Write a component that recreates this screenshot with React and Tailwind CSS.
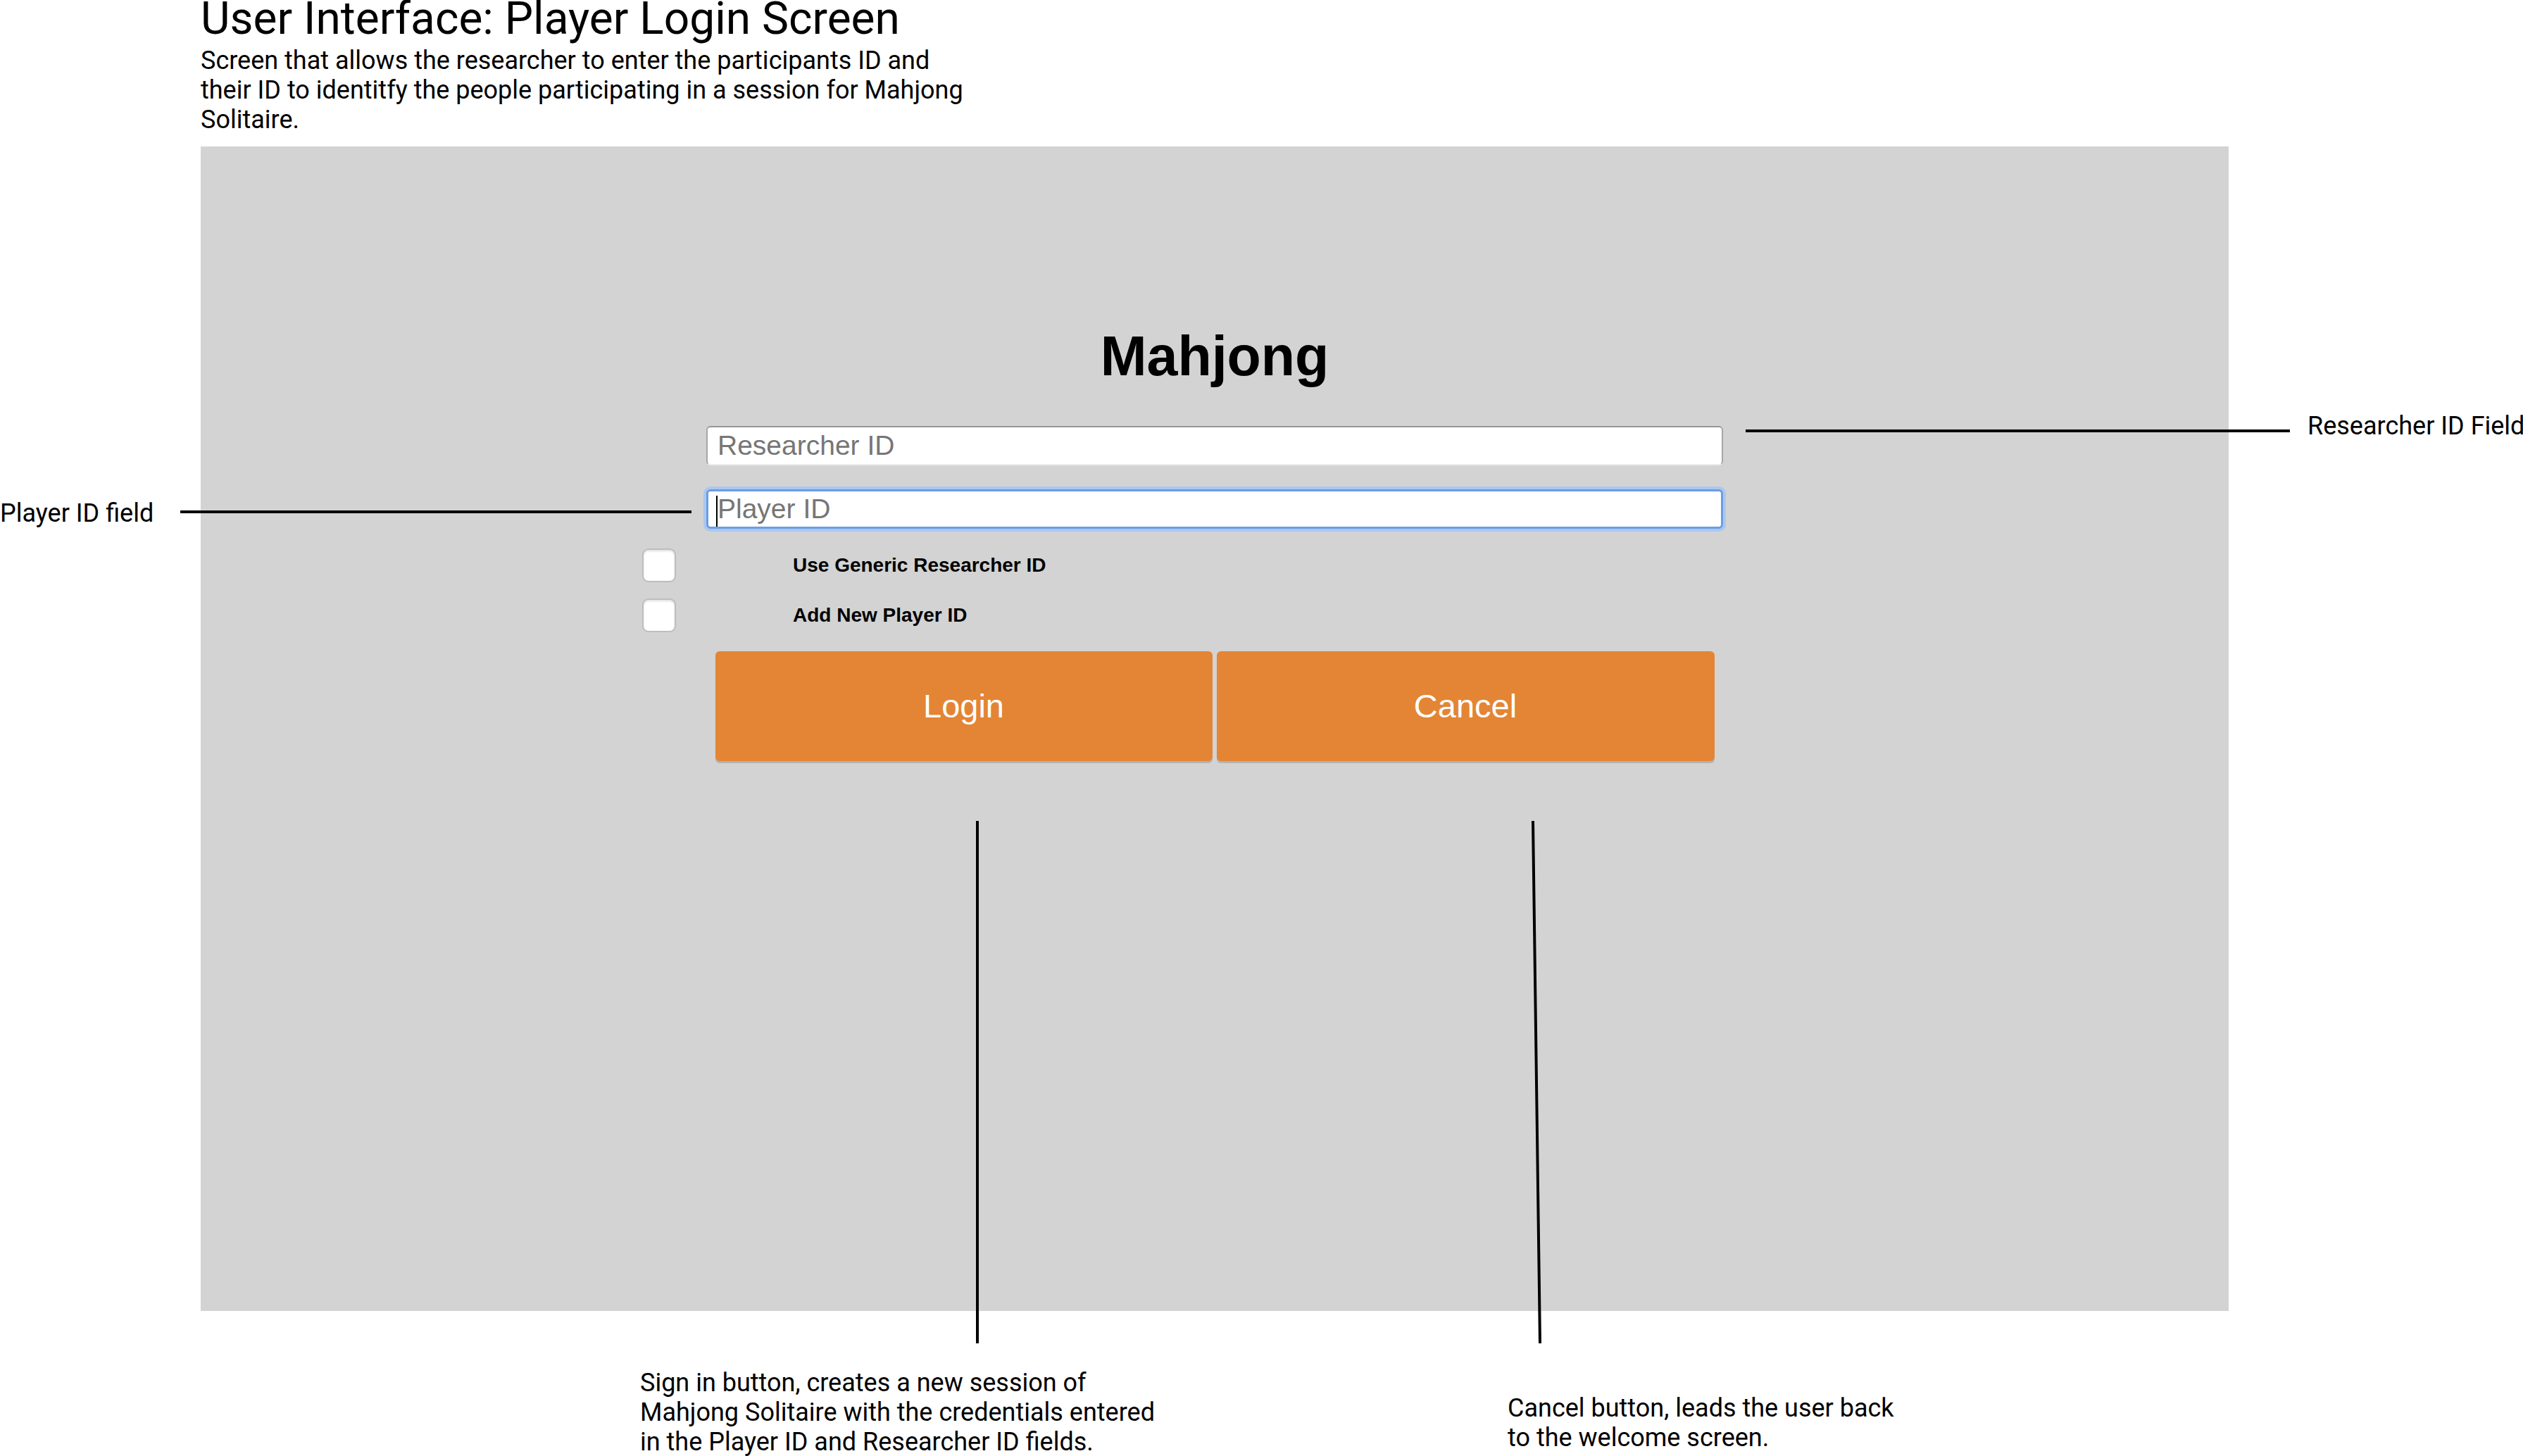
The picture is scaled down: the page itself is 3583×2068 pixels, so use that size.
import React from 'react';

const sans = "font-['Liberation_Sans',Arial,sans-serif]";

function Checkbox({ label }) {
  return (
    <div className="flex w-[1626px] items-center">
      <div className="h-[48px] w-[48px] shrink-0 rounded-[9px] border-2 border-[#bdbdbd] bg-white shadow-[inset_0_2px_3px_rgba(0,0,0,0.12)]" />
      <span className={`ml-[166px] text-[28px] font-bold text-black ${sans}`}>{label}</span>
    </div>
  );
}

export default function App() {
  return (
    <div className="relative h-[2068px] w-[3583px] overflow-hidden bg-white font-['Roboto',sans-serif] text-black">
      {/* heading */}
      <div className="pl-[285px]">
        <h1 className="text-[64px] font-normal leading-[54px]">User Interface: Player Login Screen</h1>
        <p className="mt-[11px] w-[1100px] text-[36px] leading-[42px]">
          Screen that allows the researcher to enter the participants ID and their ID to identitfy the people participating in a session for Mahjong Solitaire.
        </p>
      </div>

      {/* mockup */}
      <div className="ml-[285px] mt-[17px] flex h-[1654px] w-[2880px] flex-col items-center bg-[#d3d3d3] pt-[258px]">
        <h2 className={`text-[79px] font-bold leading-[79px] ${sans}`}>Mahjong</h2>

        <input
          placeholder="Researcher ID"
          className={`mt-[60px] h-[56px] w-[1444px] rounded-[6px] border-2 border-[#a6a6a6] border-t-[#969696] border-b-[#ececec] bg-white pl-[14px] text-[39px] outline-none placeholder:text-[#767676] ${sans}`}
        />

        <div className="relative mt-[34px] w-[1444px]">
          <input
            placeholder="Player ID"
            className={`h-[56px] w-full rounded-[6px] border-[3px] border-[#6c9de2] bg-white pl-[13px] text-[39px] shadow-[0_0_0_4px_#aac7ef] outline-none placeholder:text-[#767676] ${sans}`}
          />
          <span className="absolute left-[14px] top-[9px] h-[44px] w-[2px] bg-black" />
        </div>

        <div className="mt-[28px] flex flex-col gap-[23px]">
          <Checkbox label="Use Generic Researcher ID" />
          <Checkbox label="Add New Player ID" />
        </div>

        <div className="mt-[27px] flex gap-[6px]">
          <button className={`h-[156px] w-[706px] rounded-[6px] bg-[#e38535] text-[47px] text-white shadow-[0_3px_0_rgba(0,0,0,0.15)] ${sans}`}>
            Login
          </button>
          <button className={`h-[156px] w-[707px] rounded-[6px] bg-[#e38535] text-[47px] text-white shadow-[0_3px_0_rgba(0,0,0,0.15)] ${sans}`}>
            Cancel
          </button>
        </div>
      </div>

      {/* annotation lines */}
      <svg className="pointer-events-none absolute left-0 top-0" width="3583" height="2068">
        <line x1="2479" y1="612" x2="3252" y2="612" stroke="#000" strokeWidth="4" />
        <line x1="256" y1="727" x2="982" y2="727" stroke="#000" strokeWidth="4" />
        <line x1="1388" y1="1166" x2="1388" y2="1908" stroke="#000" strokeWidth="4" />
        <line x1="2177" y1="1166" x2="2187" y2="1908" stroke="#000" strokeWidth="4" />
      </svg>

      {/* annotation notes */}
      <p className="absolute left-[3277px] top-[584px] whitespace-nowrap text-[36px] leading-[42px]">Researcher ID Field</p>
      <p className="absolute left-0 top-[708px] whitespace-nowrap text-[36px] leading-[42px]">Player ID field</p>
      <p className="absolute left-[909px] top-[1943px] text-[36px] leading-[42px]">
        Sign in button, creates a new session of<br />
        Mahjong Solitaire with the credentials entered<br />
        in the Player ID and Researcher ID fields.
      </p>
      <p className="absolute left-[2141px] top-[1979px] text-[36px] leading-[42px]">
        Cancel button, leads the user back<br />
        to the welcome screen.
      </p>
    </div>
  );
}
